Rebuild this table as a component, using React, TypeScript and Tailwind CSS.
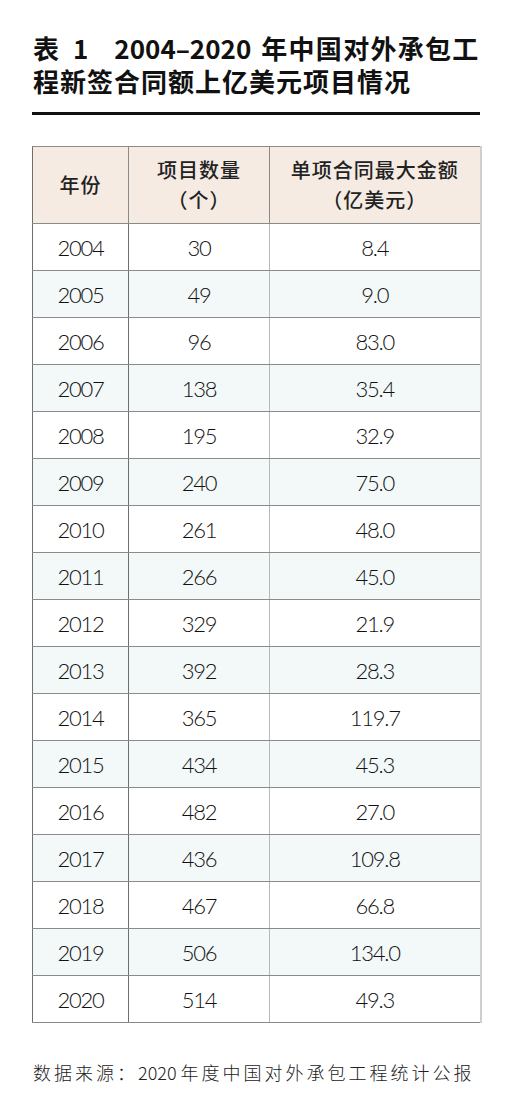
const rows: [string, string, string][] = [
  ["2004", "30", "8.4"],
  ["2005", "49", "9.0"],
  ["2006", "96", "83.0"],
  ["2007", "138", "35.4"],
  ["2008", "195", "32.9"],
  ["2009", "240", "75.0"],
  ["2010", "261", "48.0"],
  ["2011", "266", "45.0"],
  ["2012", "329", "21.9"],
  ["2013", "392", "28.3"],
  ["2014", "365", "119.7"],
  ["2015", "434", "45.3"],
  ["2016", "482", "27.0"],
  ["2017", "436", "109.8"],
  ["2018", "467", "66.8"],
  ["2019", "506", "134.0"],
  ["2020", "514", "49.3"],
];

const sans = "font-['Noto_Sans_CJK_SC','Noto_Sans',sans-serif]";

export default function App() {
  return (
    <div className="w-[516px] h-[1110px] bg-white px-[32px] pt-[31px]">
      {/* title */}
      <h1 className={`${sans} w-[460px] text-[26px] font-bold leading-[33px] tracking-[1px] text-[#111] pl-[1px] whitespace-nowrap`}>
        <span>表</span>
        <span className="ml-[13px]">1</span>
        <span className="ml-[25px] tracking-[0px]">2004–2020</span>
        <span className="ml-[10px] tracking-[1.3px]">年中国对外承包工</span>
        <br />
        程新签合同额上亿美元项目情况
      </h1>
      <div className="mt-[15px] h-[3px] w-[448px] bg-[#111]" />

      {/* table */}
      <table className="mt-[31px] w-[448px] border-collapse table-fixed">
        <colgroup>
          <col className="w-[96px]" />
          <col className="w-[141px]" />
          <col className="w-[211px]" />
        </colgroup>
        <thead>
          <tr className={`${sans} bg-[#f5ebe3] h-[77px] text-[20px] font-medium leading-[30px] tracking-[1px] text-[#222]`}>
            <th className="border border-[#8a8a8a] border-l-[#6e6e6e] font-medium">年份</th>
            <th className="border border-[#8a8a8a] font-medium">
              项目数量
              <br />
              （个）
            </th>
            <th className="border border-[#8a8a8a] border-r-2 border-r-[#cfcfcf] font-medium">
              单项合同最大金额
              <br />
              （亿美元）
            </th>
          </tr>
        </thead>
        <tbody className="font-['Lato','Liberation_Sans',sans-serif] font-light text-[22px] tracking-[-1.2px] text-[#111]">
          {rows.map((r, i) => (
            <tr key={r[0]} className={`h-[47px] ${i % 2 === 1 ? "bg-[#f3f8f8]" : "bg-white"}`}>
              <td className="border border-[#8a8a8a] border-l-[#6e6e6e] border-r-[#6e6e6e] text-center">{r[0]}</td>
              <td className="border border-[#8a8a8a] border-r-[#b8b8b8] text-center">{r[1]}</td>
              <td className="border border-[#8a8a8a] border-r-2 border-r-[#cfcfcf] text-center">{r[2]}</td>
            </tr>
          ))}
        </tbody>
      </table>

      {/* source */}
      <p className={`${sans} mt-[37px] text-[18px] font-light leading-[24px] tracking-[3px] text-[#222] pl-[1px] whitespace-nowrap`}>
        数据来源：<span className="tracking-[0px]">2020</span>
        <span className="ml-[4px]">年度中国对外承包工程统计公报</span>
      </p>
    </div>
  );
}
